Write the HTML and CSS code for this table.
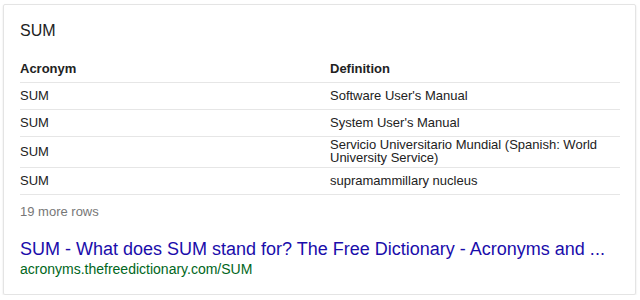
FILE: index.html
```html
<!DOCTYPE html>
<html lang="en">
<head>
<meta charset="utf-8">
<title>SUM</title>
<link rel="stylesheet" href="styles.css">
</head>
<body>
<div class="card">
  <div class="title">SUM</div>
  <div class="table">
    <div class="row head"><div>Acronym</div><div>Definition</div></div>
    <div class="row"><div>SUM</div><div>Software User's Manual</div></div>
    <div class="row"><div>SUM</div><div>System User's Manual</div></div>
    <div class="row"><div>SUM</div><div>Servicio Universitario Mundial (Spanish: World University Service)</div></div>
    <div class="row"><div>SUM</div><div>supramammillary nucleus</div></div>
  </div>
  <div class="more">19 more rows</div>
  <a class="link" href="#">SUM - What does SUM stand for? The Free Dictionary - Acronyms and ...</a>
  <div class="url">acronyms.thefreedictionary.com/SUM</div>
</div>
</body>
</html>
```
FILE: styles.css
```css
html, body {
  margin: 0;
  padding: 0;
  background: #fff;
}
body {
  font-family: Arial, "Liberation Sans", sans-serif;
  color: #222;
}
.card {
  margin: 4px 4px 0 3px;
  height: 291px;
  box-sizing: border-box;
  border: 1px solid #e4e4e4;
  border-radius: 2px;
  box-shadow: 0 1px 2px rgba(0,0,0,0.12);
  padding: 16px 15px 0 16px;
}
.title {
  font-size: 16px;
  line-height: 20px;
  color: #222;
}
.table {
  margin-top: 15px;
}
.row {
  display: grid;
  grid-template-columns: 310px 1fr;
  align-items: center;
  min-height: 27px;
  box-sizing: border-box;
  padding: 1px 0 3px;
  border-bottom: 1px solid #e6e6e6;
  font-size: 13px;
  line-height: 13px;
}
.row > div:last-child {
  padding-right: 8px;
}
.head {
  font-weight: bold;
  color: #222;
}
.more {
  margin-top: 9px;
  font-size: 13px;
  line-height: 16px;
  color: #777;
}
.link {
  display: block;
  margin-top: 18px;
  font-size: 18px;
  line-height: 22px;
  color: #1a0dab;
  text-decoration: none;
  white-space: nowrap;
}
.url {
  font-size: 14px;
  line-height: 18px;
  color: #006621;
}
```
